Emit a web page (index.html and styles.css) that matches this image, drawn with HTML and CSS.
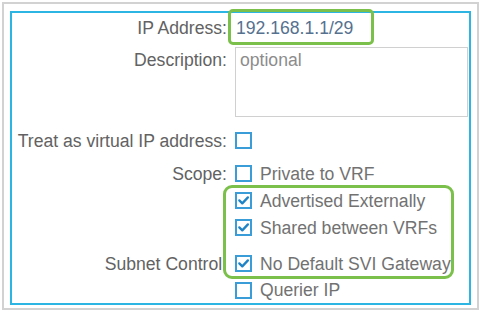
FILE: index.html
```html
<!DOCTYPE html>
<html>
<head>
<meta charset="utf-8">
<link rel="stylesheet" href="styles.css">
</head>
<body>
<div class="frame">
  <div class="panel">
    <div class="row row-ip">
      <div class="label">IP Address:</div>
      <input class="ip-input" type="text" value="192.168.1.1/29">
    </div>
    <div class="row row-desc">
      <div class="label">Description:</div>
      <textarea class="desc" placeholder="optional"></textarea>
    </div>
    <div class="row row-treat">
      <div class="label">Treat as virtual IP address:</div>
      <span class="box"></span>
    </div>
    <div class="row row-scope">
      <div class="label">Scope:</div>
      <span class="box"></span><span class="opt">Private to VRF</span>
    </div>
    <div class="row">
      <div class="label"></div>
      <span class="box"><svg viewBox="0 0 13 13"><polyline points="2.3,6.4 5.3,9.4 10.9,3.4"/></svg></span><span class="opt">Advertised Externally</span>
    </div>
    <div class="row">
      <div class="label"></div>
      <span class="box"><svg viewBox="0 0 13 13"><polyline points="2.3,6.4 5.3,9.4 10.9,3.4"/></svg></span><span class="opt">Shared between VRFs</span>
    </div>
    <div class="row row-subnet">
      <div class="label">Subnet Control:</div>
      <span class="box"><svg viewBox="0 0 13 13"><polyline points="2.3,6.4 5.3,9.4 10.9,3.4"/></svg></span><span class="opt">No Default SVI Gateway</span>
    </div>
    <div class="row row-last">
      <div class="label"></div>
      <span class="box"></span><span class="opt">Querier IP</span>
    </div>
    <div class="hl hl-ip"></div>
    <div class="hl hl-group"></div>
  </div>
</div>
</body>
</html>
```

FILE: styles.css
```css
html, body {
  margin: 0;
  padding: 0;
  background: #ffffff;
}
body {
  font-family: "Liberation Sans", Arial, sans-serif;
  font-size: 17.6px;
  color: #5e5e5e;
}
.frame {
  box-sizing: border-box;
  margin: 2px 0 0 2px;
  width: 477px;
  height: 308px;
  border: 2px solid #d2d2d2;
  padding: 7px 6px 3px 6px;
}
.panel {
  position: relative;
  box-sizing: border-box;
  height: 294px;
  border: 2px solid #2cb5e2;
}
.row {
  display: flex;
  align-items: center;
  height: 27px;
}
.label {
  flex: 0 0 215px;
  width: 215px;
  margin-right: 8px;
  text-align: right;
  line-height: 20px;
  color: #626262;
  white-space: nowrap;
}
.row-ip {
  height: 30px;
}
.ip-input {
  border: none;
  outline: none;
  padding: 0 0 0 1px;
  margin: 0;
  height: 30px;
  width: 200px;
  font-family: inherit;
  font-size: 17.6px;
  color: #55718f;
  background: transparent;
}
.row-desc {
  margin-top: 4px;
  height: 70px;
  align-items: flex-start;
}
.row-desc .label {
  padding-top: 3px;
}
.desc {
  box-sizing: border-box;
  width: 233px;
  height: 70px;
  margin: 0;
  border: 1px solid #d0d0d0;
  padding: 2px 4px;
  font-family: inherit;
  font-size: 17.6px;
  line-height: 20px;
  resize: none;
  outline: none;
  color: #5e5e5e;
}
.desc::placeholder {
  color: #8c8c8c;
  opacity: 1;
}
.row-treat {
  margin-top: 10px;
}
.row-scope {
  margin-top: 6px;
}
.row-subnet {
  margin-top: 9px;
}
.row-last {
  height: 26px;
}
.box {
  box-sizing: border-box;
  flex: 0 0 17px;
  width: 17px;
  height: 17px;
  border: 2px solid #3a9dd8;
  background: #ffffff;
  margin-right: 8px;
  display: flex;
}
.box svg {
  width: 13px;
  height: 13px;
}
.box polyline {
  fill: none;
  stroke: #1f84c6;
  stroke-width: 2.3;
  stroke-linecap: round;
  stroke-linejoin: round;
}
.opt {
  color: #727272;
  white-space: nowrap;
  line-height: 20px;
}
.hl {
  position: absolute;
  box-sizing: border-box;
  border: 3px solid #7bc04a;
}
.hl-ip {
  left: 216px;
  top: -4px;
  width: 146px;
  height: 36px;
  border-radius: 5px;
}
.hl-group {
  left: 211px;
  top: 172px;
  width: 231px;
  height: 94px;
  border-radius: 9px;
}
```
